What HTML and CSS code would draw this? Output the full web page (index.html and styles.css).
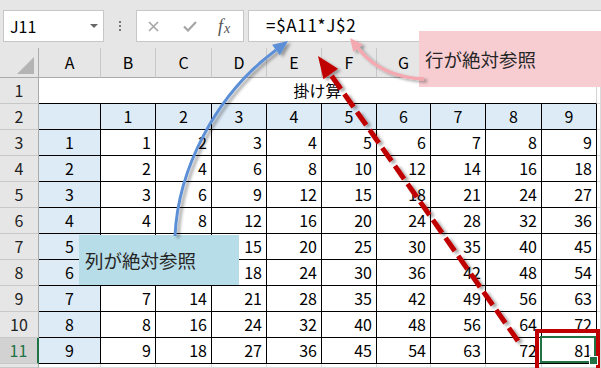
FILE: index.html
```html
<!DOCTYPE html>
<html lang="ja">
<head>
<meta charset="utf-8">
<title>掛け算</title>
<link rel="stylesheet" href="styles.css">
</head>
<body>
<div class="app">
  <div class="toolbar">
    <div class="namebox"><span class="name">J11</span><span class="dd"></span></div>
    <div class="grip"><i></i><i></i><i></i></div>
    <div class="fxbtns">
      <svg class="ico-x" width="11" height="11" viewBox="0 0 11 11"><path d="M1 1L10 10M10 1L1 10" stroke="#a6a6a6" stroke-width="1.6" fill="none"/></svg>
      <svg class="ico-ok" width="14" height="11" viewBox="0 0 14 11"><path d="M1 5.5L5 9.5L13 1" stroke="#a6a6a6" stroke-width="2.2" fill="none"/></svg>
      <span class="fx">f<span class="fxx">x</span></span>
    </div>
    <div class="formula">=$A11*J$2</div>
  </div>

  <div class="sheet">
    <div class="corner"><span class="tri"></span></div>
    <div class="ch">A</div><div class="ch">B</div><div class="ch">C</div><div class="ch">D</div><div class="ch">E</div>
    <div class="ch">F</div><div class="ch">G</div><div class="ch">H</div><div class="ch">I</div><div class="ch">J</div><div class="ch"></div>

    <div class="rh">1</div><div class="title">掛け算</div><div class="gc"></div>

    <div class="rh">2</div><div class="c hd"></div>
    <div class="c hd">1</div><div class="c hd">2</div><div class="c hd">3</div><div class="c hd">4</div><div class="c hd">5</div><div class="c hd">6</div><div class="c hd">7</div><div class="c hd">8</div><div class="c hd">9</div><div class="gc"></div>

    <div class="rh">3</div><div class="c hd">1</div>
    <div class="c">1</div><div class="c">2</div><div class="c">3</div><div class="c">4</div><div class="c">5</div><div class="c">6</div><div class="c">7</div><div class="c">8</div><div class="c">9</div><div class="gc"></div>

    <div class="rh">4</div><div class="c hd">2</div>
    <div class="c">2</div><div class="c">4</div><div class="c">6</div><div class="c">8</div><div class="c">10</div><div class="c">12</div><div class="c">14</div><div class="c">16</div><div class="c">18</div><div class="gc"></div>

    <div class="rh">5</div><div class="c hd">3</div>
    <div class="c">3</div><div class="c">6</div><div class="c">9</div><div class="c">12</div><div class="c">15</div><div class="c">18</div><div class="c">21</div><div class="c">24</div><div class="c">27</div><div class="gc"></div>

    <div class="rh">6</div><div class="c hd">4</div>
    <div class="c">4</div><div class="c">8</div><div class="c">12</div><div class="c">16</div><div class="c">20</div><div class="c">24</div><div class="c">28</div><div class="c">32</div><div class="c">36</div><div class="gc"></div>

    <div class="rh">7</div><div class="c hd">5</div>
    <div class="c">5</div><div class="c">10</div><div class="c">15</div><div class="c">20</div><div class="c">25</div><div class="c">30</div><div class="c">35</div><div class="c">40</div><div class="c">45</div><div class="gc"></div>

    <div class="rh">8</div><div class="c hd">6</div>
    <div class="c">6</div><div class="c">12</div><div class="c">18</div><div class="c">24</div><div class="c">30</div><div class="c">36</div><div class="c">42</div><div class="c">48</div><div class="c">54</div><div class="gc"></div>

    <div class="rh">9</div><div class="c hd">7</div>
    <div class="c">7</div><div class="c">14</div><div class="c">21</div><div class="c">28</div><div class="c">35</div><div class="c">42</div><div class="c">49</div><div class="c">56</div><div class="c">63</div><div class="gc"></div>

    <div class="rh">10</div><div class="c hd">8</div>
    <div class="c">8</div><div class="c">16</div><div class="c">24</div><div class="c">32</div><div class="c">40</div><div class="c">48</div><div class="c">56</div><div class="c">64</div><div class="c">72</div><div class="gc"></div>

    <div class="rh sel">11</div><div class="c hd">9</div>
    <div class="c">9</div><div class="c">18</div><div class="c">27</div><div class="c">36</div><div class="c">45</div><div class="c">54</div><div class="c">63</div><div class="c">72</div><div class="c active">81</div><div class="gc"></div>

    <div class="rh"></div>
    <div class="gc"></div><div class="gc"></div><div class="gc"></div><div class="gc"></div><div class="gc"></div><div class="gc"></div><div class="gc"></div><div class="gc"></div><div class="gc"></div><div class="gc"></div><div class="gc"></div>
  </div>

  <div class="callout pink">行が絶対参照</div>
  <div class="callout blue">列が絶対参照</div>

  <svg class="arrows" width="601" height="368" viewBox="0 0 601 368">
    <defs>
      <filter id="sh" x="-30%" y="-30%" width="160%" height="160%">
        <feDropShadow dx="3" dy="2" stdDeviation="1.6" flood-color="#000" flood-opacity="0.35"/>
      </filter>
    </defs>
    <g filter="url(#sh)">
      <path d="M175 236 C178 170 215 95 276 50" fill="none" stroke="#5b8fd6" stroke-width="3"/>
      <polygon points="288,41 279.9,55.2 272.1,44.8" fill="#5b8fd6"/>
    </g>
    <g filter="url(#sh)">
      <path d="M424 79 C400 78 375 70 358 48" fill="none" stroke="#f4a9b1" stroke-width="3.5"/>
      <polygon points="350,38 362.7,44.6 353.3,52" fill="#f4a9b1"/>
    </g>
    <g filter="url(#sh)">
      <line x1="518" y1="341" x2="331" y2="75" stroke="#c00000" stroke-width="5" stroke-dasharray="16 6"/>
      <polygon points="318,56 338,68.8 323.4,79.2" fill="#c00000"/>
    </g>
    <rect x="537" y="331" width="61" height="40" fill="none" stroke="#c00000" stroke-width="4"/>
  </svg>
</div>
</body>
</html>
```

FILE: styles.css
```css
* { box-sizing: border-box; margin: 0; padding: 0; }
html, body { width: 601px; height: 368px; overflow: hidden; }
body {
  background: #e6e6e6;
  font-family: "Noto Sans CJK JP", "Noto Sans", sans-serif;
  color: #000;
}
.app { position: relative; width: 601px; height: 368px; }

/* toolbar */
.toolbar {
  height: 48px;
  display: flex;
  align-items: flex-start;
  padding: 10px 0 0 3px;
}
.namebox {
  width: 101px; height: 32px;
  background: #fff; border: 1px solid #c6c6c6;
  display: flex; align-items: center; justify-content: space-between;
  padding: 0 5px 0 6px;
}
.name { font-size: 16px; line-height: 1; }
.dd {
  width: 0; height: 0;
  border-left: 4px solid transparent; border-right: 4px solid transparent;
  border-top: 4px solid #666;
}
.grip {
  width: 32px; height: 32px;
  display: flex; flex-direction: column; align-items: center; justify-content: center; gap: 2px;
}
.grip i { display: block; width: 2px; height: 2px; background: #777; }
.fxbtns {
  width: 108px; height: 32px;
  background: #fff; border: 1px solid #c6c6c6;
  display: flex; align-items: center;
  padding-left: 11px;
}
.ico-x { margin-right: 24px; }
.ico-ok { margin-right: 21px; }
.fx {
  font-family: "Liberation Serif", serif; font-style: italic;
  font-size: 18px; color: #555; line-height: 1;
  display: flex; align-items: flex-end;
}
.fxx { font-size: 14px; margin-left: 1px; position: relative; top: 1px; }
.formula {
  flex: 1; height: 32px; margin-left: 4px;
  background: #fff; border: 1px solid #c6c6c6; border-right: none;
  padding-left: 17px;
  font-size: 17px; line-height: 28px; letter-spacing: 0.7px;
}

/* sheet */
.sheet {
  display: grid;
  grid-template-columns: 39px 62px 55px 56px 55px 55px 55px 54px 55px 56px 55px 1fr;
  grid-template-rows: 30px 26px repeat(10, 26px) 1fr;
  height: 320px;
  background: #fff;
  font-size: 16px;
}
.sheet > div {
  display: flex; align-items: center;
  line-height: 1;
  padding-bottom: 2px;
}
.corner {
  background: #e6e6e6;
  border-right: 1px solid #ababab; border-bottom: 1px solid #ababab;
  justify-content: flex-end; align-items: flex-end !important;
  padding: 0 4px 3px 0 !important;
}
.tri {
  width: 0; height: 0;
  border-left: 17px solid transparent;
  border-bottom: 17px solid #b4b4b4;
}
.ch {
  background: #e6e6e6;
  border-right: 1px solid #c8c8c8; border-bottom: 1px solid #ababab;
  justify-content: center;
}
.rh {
  background: #e6e6e6;
  border-right: 1px solid #ababab; border-bottom: 1px solid #c8c8c8;
  justify-content: center;
  color: #222;
}
.rh.sel {
  background: #d2d2d2; color: #217346;
  border-right: 2px solid #217346;
}
.title {
  grid-column: span 10;
  justify-content: center;
  border-right: 1px solid #d4d4d4; border-bottom: 1px solid #000;
}
.gc { border-right: 1px solid #dadada; border-bottom: 1px solid #dadada; }
.c {
  border-right: 1px solid #000; border-bottom: 1px solid #000;
  justify-content: flex-end;
  padding-right: 4px;
}
.c.hd { background: #ddebf7; justify-content: center; padding-right: 0; }
.c.active { position: relative; }
.c.active::after {
  content: ""; position: absolute;
  left: -2px; top: -2px; right: 0; bottom: 0;
  border: 2px solid #217346;
}
.c.active::before {
  content: ""; position: absolute;
  right: -2px; bottom: -2px; width: 7px; height: 7px;
  background: #217346; border: 1px solid #fff;
  z-index: 1;
}

/* callouts */
.callout {
  position: absolute;
  display: flex; align-items: center;
  padding-left: 6px;
  font-size: 18.5px; color: #262626;
}
.pink { left: 419px; top: 31px; width: 182px; height: 56px; background: #f8cdd2; }
.blue { left: 79px; top: 235px; width: 160px; height: 50px; background: #b7dde8; }

.arrows { position: absolute; left: 0; top: 0; pointer-events: none; }
```
